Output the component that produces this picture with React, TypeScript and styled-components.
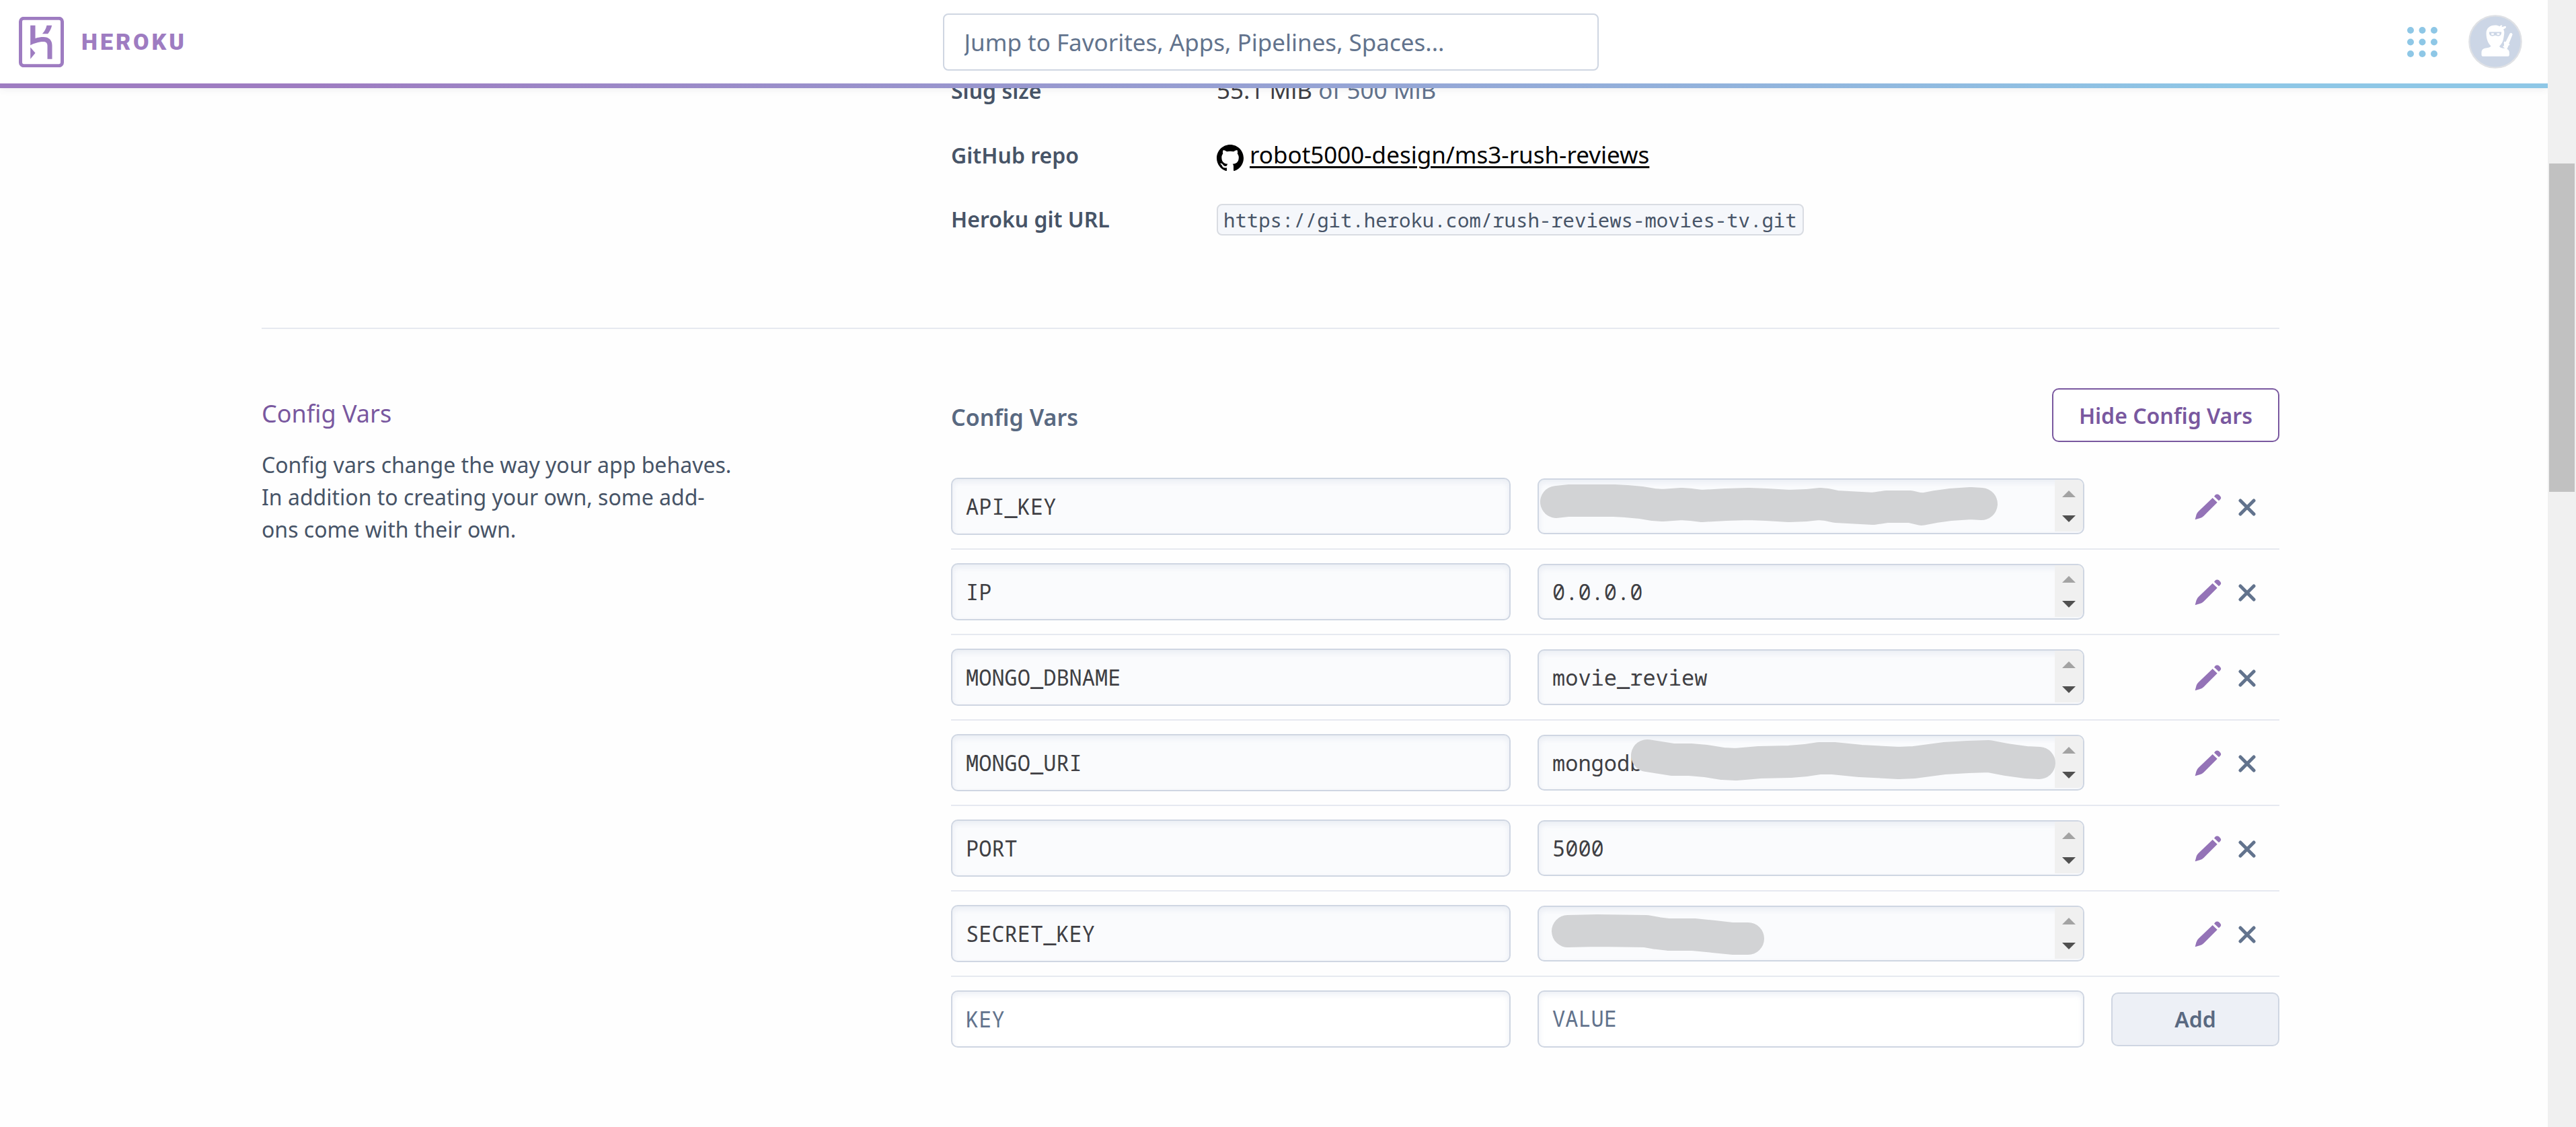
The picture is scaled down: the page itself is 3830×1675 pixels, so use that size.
import React, { useState } from "react";
import styled, { createGlobalStyle, css } from "styled-components";

const sans = `"Noto Sans", "Open Sans", sans-serif`;
const mono = `"Noto Sans Mono", "DejaVu Sans Mono", monospace`;

const color = {
  purple: "#9e7cc1",
  purpleDark: "#79589f",
  blue: "#8ec7e6",
  ink: "#3f3f44",
  slate: "#475467",
  slateMid: "#596981",
  slateLight: "#62738d",
  line: "#e6e9f0",
  border: "#cfd6e2",
  field: "#fafbfd",
};

const GlobalStyle = createGlobalStyle`
  * { box-sizing: border-box; }
  body {
    margin: 0;
    background: #fefefe;
    color: ${color.slate};
    font-family: ${sans};
    font-size: 32px;
    line-height: 48px;
  }
`;

const Shell = styled.div`
  display: grid;
  grid-template-columns: minmax(0, 1fr) 42px;
  min-height: 100vh;
`;

const Page = styled.div`
  min-width: 0;
`;

const PageScrollbar = styled.div`
  position: relative;
  z-index: 3;
  background: #f0f0f0;
  padding: 243px 2px 0;
`;

const PageThumb = styled.div`
  height: 488px;
  background: #c1c1c1;
`;

const Header = styled.header`
  position: sticky;
  top: 0;
  z-index: 2;
  background: #fff;
  box-shadow: 0 2px 10px rgba(60, 60, 80, 0.08);
`;

const HeaderBar = styled.div`
  display: grid;
  grid-template-columns: 1fr minmax(0, 975px) 1fr;
  align-items: center;
  height: 124px;
  padding: 0 38px 0 28px;
`;

const HeaderRule = styled.div`
  height: 7px;
  background: linear-gradient(90deg, ${color.purple} 12%, ${color.blue} 88%);
`;

const Brand = styled.a`
  justify-self: start;
  display: flex;
  align-items: center;
  gap: 26px;
  color: ${color.purple};
  font-family: Roboto, sans-serif;
  font-size: 34px;
  font-weight: 900;
  letter-spacing: 4px;
  text-decoration: none;
`;

const SearchInput = styled.input`
  width: 100%;
  height: 85px;
  padding: 0 30px;
  border: 2px solid ${color.border};
  border-radius: 8px;
  background: #fff;
  color: ${color.ink};
  font-family: ${sans};
  font-size: 35px;
  &::placeholder {
    color: ${color.slateLight};
    opacity: 1;
  }
`;

const HeaderTools = styled.div`
  justify-self: end;
  display: flex;
  align-items: center;
  gap: 46px;
`;

const BareButton = styled.button`
  display: flex;
  padding: 0;
  border: 0;
  background: none;
  cursor: pointer;
`;

const Main = styled.main`
  width: calc(100% - 10px);
  padding: 0 20px 80px;
  margin-top: -21px;
`;

const Container = styled.div`
  max-width: 3000px;
  margin: 0 auto;
`;

const Columns = styled.section`
  display: grid;
  grid-template-columns: minmax(0, 1025fr) minmax(0, 1975fr);
`;

const Facts = styled.dl`
  grid-column: 2;
  display: grid;
  gap: 48px;
  margin: 0 0 137px;
`;

const Fact = styled.div`
  display: flex;
  align-items: baseline;
  height: 48px;
`;

const FactName = styled.dt`
  flex: 0 0 395px;
  font-weight: 600;
`;

const FactValue = styled.dd`
  margin: 0;
  color: ${color.ink};
  font-size: 35px;
`;

const Muted = styled.span`
  color: ${color.slateLight};
`;

const RepoLink = styled.a`
  color: #000;
  text-decoration: none;
  svg {
    margin-right: 9px;
    vertical-align: -12px;
  }
  span {
    text-decoration: underline;
    text-decoration-thickness: 3px;
    text-underline-offset: 4px;
  }
`;

const CodePill = styled.code`
  display: block;
  padding: 0 8px;
  border: 2px solid #d9dce2;
  border-radius: 8px;
  background: #f5f7fb;
  color: ${color.slate};
  font-family: ${mono};
  font-size: 29px;
  line-height: 43px;
`;

const ConfigSection = styled(Columns)`
  border-top: 2px solid ${color.line};
  padding-top: 88px;
`;

const Intro = styled.div`
  max-width: 710px;
  padding-top: 14px;
`;

const IntroTitle = styled.h2`
  margin: 0 0 28px;
  color: ${color.purpleDark};
  font-size: 36px;
  font-weight: 400;
`;

const IntroText = styled.p`
  margin: 0;
`;

const PanelHead = styled.div`
  display: flex;
  justify-content: space-between;
  align-items: center;
  margin-bottom: 33px;
`;

const PanelTitle = styled.h3`
  margin: 0;
  padding-top: 6px;
  color: ${color.slateMid};
  font-size: 34px;
  font-weight: 600;
`;

const Button = styled.button<{ $outline?: boolean }>`
  height: 80px;
  padding: 0 38px;
  border: 2px solid ${(p) => (p.$outline ? color.purpleDark : color.border)};
  border-radius: 10px;
  background: ${(p) => (p.$outline ? "#fff" : "#edf0f6")};
  color: ${(p) => (p.$outline ? color.purpleDark : color.slateMid)};
  font-family: ${sans};
  font-size: 32px;
  font-weight: 600;
  cursor: pointer;
`;

const VarRow = styled.div`
  display: grid;
  grid-template-columns: minmax(0, 832fr) minmax(0, 813fr) 250px;
  column-gap: 40px;
  align-items: center;
  padding: 20px 0;
  & + & {
    border-top: 2px solid ${color.line};
  }
`;

const fieldText = css`
  color: ${color.ink};
  font-family: ${mono};
  font-size: 32px;
  &::placeholder {
    color: ${color.slateLight};
    opacity: 1;
  }
`;

const fieldBox = css<{ $editable?: boolean }>`
  border: 2px solid ${color.border};
  border-radius: 10px;
  background: ${(p) => (p.$editable ? "#fff" : color.field)};
  box-shadow: inset 0 4px 8px rgba(207, 214, 230, 0.4);
`;

const KeyInput = styled.input<{ $editable?: boolean }>`
  ${fieldBox}
  ${fieldText}
  width: 100%;
  height: 85px;
  padding: 0 20px;
`;

const ValueBox = styled.div<{ $editable?: boolean }>`
  ${fieldBox}
  position: relative;
  display: flex;
  height: ${(p) => (p.$editable ? 85 : 83)}px;
`;

const ValueArea = styled.textarea`
  ${fieldText}
  flex: 1;
  min-width: 0;
  padding: 16px 20px 0;
  border: 0;
  background: transparent;
  line-height: 48px;
  resize: none;
  overflow: hidden;
  white-space: pre;
`;

const Gutter = styled.div`
  flex: 0 0 42px;
  display: flex;
  flex-direction: column;
  justify-content: space-between;
  align-items: center;
  margin-bottom: 2px;
  padding: 16px 0 14px;
  border-radius: 0 8px 8px 0;
  background: #f0f0f0;
`;

const Scribble = styled.svg`
  position: absolute;
  top: -2px;
  left: -2px;
  width: 100%;
  height: 83px;
  overflow: visible;
  pointer-events: none;
`;

const Actions = styled.div`
  display: flex;
  justify-content: flex-end;
  align-items: center;
  gap: 25px;
  padding: 2px 35px 0 0;
`;

const HerokuMark = () => (
  <svg width="67" height="75" viewBox="84 72 200 225" aria-hidden="true">
    <rect x="91" y="79" width="186" height="211" rx="14" fill="none" stroke={color.purple} strokeWidth="15" />
    <g fill={color.purple}>
      <path d="M135 110H157V168C170 164 182 162 193 162C218 162 232 176 232 200V260H211V201C211 188 204 183 192 183C172 183 150 191 135 199Z" />
      <path d="M208 110H231C228 124 221 137 213 148H188C198 137 205 124 208 110Z" />
      <path d="M135 208L157 233L135 260Z" />
    </g>
  </svg>
);

const DotsIcon = () => (
  <svg width="45" height="45" viewBox="0 0 45 45" fill={color.blue} aria-hidden="true">
    {[5, 22.5, 40].map((y) => [5, 22.5, 40].map((x) => <circle key={`${x}-${y}`} cx={x} cy={y} r="5" />))}
  </svg>
);

const NinjaAvatar = () => (
  <svg width="80" height="80" viewBox="27 29 238 238" aria-hidden="true">
    <circle cx="146" cy="148" r="115" fill="#ccd6e6" stroke="#dfe1e5" strokeWidth="7" />
    <g fill="#fff">
      <path d="M106 111C106 88 122 75 145 75C154 75 160 77 165 80C169 75 172 74 177 76L174 83L190 79C195 80 195 85 191 88L182 94C186 101 187 108 184 122C182 142 176 158 164 168C166 172 170 175 176 176L188 178L182 172C178 169 181 164 185 166L184 152C184 147 189 146 192 149L210 112C214 107 223 110 222 117L206 157C212 159 210 165 205 164L198 180C204 183 208 188 208 196V205C208 210 205 213 200 213H93C88 213 85 210 85 205V196C85 184 92 178 104 176C116 174 124 172 127 167C113 155 106 134 106 111Z" />
    </g>
    <path d="M119 105H173C174 118 167 124 156 123C151 123 149 120 146 120C143 120 141 123 136 123C125 124 118 118 119 105Z" fill="#ccd6e6" />
    <g fill="#fff">
      <ellipse cx="134" cy="114" rx="7" ry="4" />
      <ellipse cx="159" cy="114" rx="7" ry="4" />
    </g>
  </svg>
);

const GithubMark = () => (
  <svg width="40" height="40" viewBox="0 0 16 16" aria-hidden="true">
    <path
      fill="#000"
      d="M8 0C3.58 0 0 3.58 0 8c0 3.54 2.29 6.53 5.47 7.59.4.07.55-.17.55-.38 0-.19-.01-.82-.01-1.49-2.01.37-2.53-.49-2.69-.94-.09-.23-.48-.94-.82-1.13-.28-.15-.68-.52-.01-.53.63-.01 1.08.58 1.23.82.72 1.21 1.87.87 2.33.66.07-.52.28-.87.51-1.07-1.78-.2-3.64-.89-3.64-3.95 0-.87.31-1.59.82-2.15-.08-.2-.36-1.02.08-2.12 0 0 .67-.21 2.2.82.64-.18 1.32-.27 2-.27s1.36.09 2 .27c1.53-1.04 2.2-.82 2.2-.82.44 1.1.16 1.92.08 2.12.51.56.82 1.27.82 2.15 0 3.07-1.87 3.75-3.65 3.95.29.25.54.73.54 1.48 0 1.07-.01 1.93-.01 2.2 0 .21.15.46.55.38A8.01 8.01 0 0 0 16 8c0-4.42-3.58-8-8-8Z"
    />
  </svg>
);

const PencilIcon = () => (
  <svg width="40" height="39" viewBox="0 0 120 117" fill="#9473b7" aria-hidden="true">
    <path d="M2 115L7 95Q10 84 18 77L80 18L101 38L41 98Q34 105 25 108Z" />
    <path d="M87 11L93 4Q100 -1 108 4L115 11Q120 18 115 24L108 31Z" />
  </svg>
);

const CrossIcon = () => (
  <svg width="26" height="26" viewBox="0 0 26 26" aria-hidden="true">
    <path d="M3 3L23 23M23 3L3 23" stroke={color.slateLight} strokeWidth="5" strokeLinecap="round" />
  </svg>
);

const Arrow = ({ down }: { down?: boolean }) => (
  <svg width="20" height="10" viewBox="0 0 20 10" aria-hidden="true">
    <path d={down ? "M0 0H20L10 10Z" : "M0 10H20L10 0Z"} fill={down ? "#505050" : "#a3a3a3"} />
  </svg>
);

type ConfigVar = { name: string; value: string; mask?: string };

const initialVars: ConfigVar[] = [
  {
    name: "API_KEY",
    value: "",
    mask: "28,35 46,33 114,33 132,34 154,36 172,39 186,40 200,39 214,38 228,39 244,41 280,39 314,38 340,39 374,41 400,40 419,38 430,39 444,42 499,45 519,42 554,42 571,46 592,42 614,39 644,37 660,38",
  },
  { name: "IP", value: "0.0.0.0" },
  { name: "MONGO_DBNAME", value: "movie_review" },
  {
    name: "MONGO_URI",
    value: "mongodb",
    mask: "163,31 201,37 227,37 250,39 275,43 295,44 330,41 375,40 399,38 419,35 440,35 480,39 537,42 560,41 605,35 640,33 671,32 697,37 726,41 746,42",
  },
  { name: "PORT", value: "5000" },
  {
    name: "SECRET_KEY",
    value: "",
    mask: "45,38 89,37 161,38 178,41 195,43 232,43 262,46 290,49 313,49",
  },
];

function VarEntry({ item, onRemove }: { item: ConfigVar; onRemove: () => void }) {
  return (
    <VarRow>
      <KeyInput aria-label={`${item.name} key`} defaultValue={item.name} readOnly />
      <ValueBox>
        <ValueArea aria-label={`${item.name} value`} rows={1} defaultValue={item.value} readOnly />
        <Gutter>
          <Arrow />
          <Arrow down />
        </Gutter>
        {item.mask && (
          <Scribble aria-hidden="true">
            <polyline
              points={item.mask}
              fill="none"
              stroke="#d2d3d5"
              strokeWidth="48"
              strokeLinecap="round"
              strokeLinejoin="round"
            />
          </Scribble>
        )}
      </ValueBox>
      <Actions>
        <BareButton aria-label={`Edit ${item.name}`}>
          <PencilIcon />
        </BareButton>
        <BareButton aria-label={`Remove ${item.name}`} onClick={onRemove}>
          <CrossIcon />
        </BareButton>
      </Actions>
    </VarRow>
  );
}

export default function App() {
  const [vars, setVars] = useState(initialVars);

  return (
    <Shell>
      <GlobalStyle />
      <Page>
        <Header>
          <HeaderBar>
            <Brand href="#">
              <HerokuMark />
              HEROKU
            </Brand>
            <SearchInput type="search" aria-label="Jump to" placeholder="Jump to Favorites, Apps, Pipelines, Spaces..." />
            <HeaderTools>
              <BareButton aria-label="Switch product">
                <DotsIcon />
              </BareButton>
              <BareButton aria-label="Account">
                <NinjaAvatar />
              </BareButton>
            </HeaderTools>
          </HeaderBar>
          <HeaderRule />
        </Header>
        <Main>
          <Container>
            <Columns>
              <Facts>
                <Fact>
                  <FactName>Slug size</FactName>
                  <FactValue>
                    55.1 MiB <Muted>of 500 MiB</Muted>
                  </FactValue>
                </Fact>
                <Fact>
                  <FactName>GitHub repo</FactName>
                  <FactValue>
                    <RepoLink href="#">
                      <GithubMark />
                      <span>robot5000-design/ms3-rush-reviews</span>
                    </RepoLink>
                  </FactValue>
                </Fact>
                <Fact>
                  <FactName>Heroku git URL</FactName>
                  <FactValue>
                    <CodePill>https://git.heroku.com/rush-reviews-movies-tv.git</CodePill>
                  </FactValue>
                </Fact>
              </Facts>
            </Columns>
            <ConfigSection>
              <Intro>
                <IntroTitle>Config Vars</IntroTitle>
                <IntroText>
                  Config vars change the way your app behaves. In addition to creating your own, some add-ons come with
                  their own.
                </IntroText>
              </Intro>
              <div>
                <PanelHead>
                  <PanelTitle>Config Vars</PanelTitle>
                  <Button $outline>Hide Config Vars</Button>
                </PanelHead>
                {vars.map((item) => (
                  <VarEntry
                    key={item.name}
                    item={item}
                    onRemove={() => setVars(vars.filter((other) => other !== item))}
                  />
                ))}
                <VarRow>
                  <KeyInput $editable aria-label="New key" placeholder="KEY" />
                  <ValueBox $editable>
                    <ValueArea aria-label="New value" rows={1} placeholder="VALUE" />
                  </ValueBox>
                  <Button>Add</Button>
                </VarRow>
              </div>
            </ConfigSection>
          </Container>
        </Main>
      </Page>
      <PageScrollbar aria-hidden="true">
        <PageThumb />
      </PageScrollbar>
    </Shell>
  );
}
